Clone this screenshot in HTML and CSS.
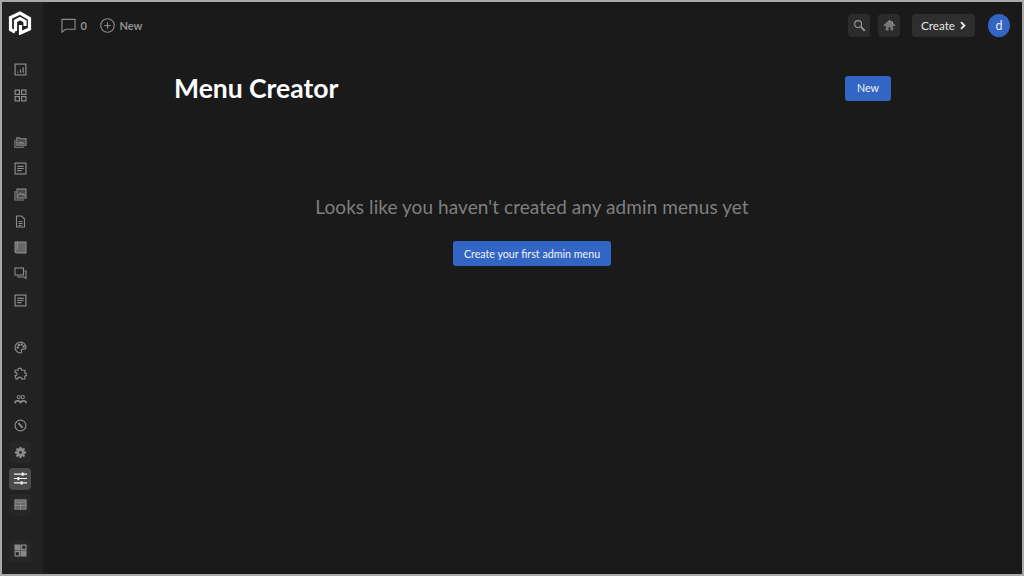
FILE: index.html
```html
<!DOCTYPE html>
<html lang="en">
<head>
<meta charset="utf-8">
<title>Menu Creator</title>
<link rel="stylesheet" href="styles.css">
</head>
<body>
<div class="app">
  <aside class="sidebar">
    <div class="logo">
      <svg viewBox="0 0 24 24" width="24" height="24" fill="none" stroke="#fff" stroke-width="3.200" stroke-linejoin="miter">
        <path d="M7 21L2.500 18.500V6.500L12 2l9.500 5.500V18l-9 4V14"/>
        <path d="M7.500 20V10L12 7.500l5 3V15"/>
      </svg>
    </div>
    <nav class="group group-top">
      <a class="ico"><svg viewBox="0 0 12 12"><rect x="1" y="1" width="10" height="10"/><path d="M3.500 9V8M6 9V6M8.500 9V4"/></svg></a>
      <a class="ico"><svg viewBox="0 0 12 12"><rect x="1" y="1" width="4" height="4"/><rect x="7" y="1" width="4" height="4"/><rect x="1" y="7" width="4" height="4"/><rect x="7" y="7" width="4" height="4"/></svg></a>
    </nav>
    <nav class="group group-content">
      <a class="ico"><svg viewBox="0 0 14 12"><path d="M1 3v8h10"/><path class="low" d="M3 9V1h3l1 1h6v7z"/><path d="M4.500 7.500l2-2 1.500 1.500 1-1 2 1.500"/></svg></a>
      <a class="ico"><svg viewBox="0 0 12 12"><rect x="1" y="1" width="10" height="10"/><path d="M3 4h6M3 6h6M3 8h4"/></svg></a>
      <a class="ico"><svg viewBox="0 0 13 13"><path d="M1 3v9h9"/><rect class="low" x="3" y="1" width="9" height="9"/><path d="M4 8l2.500-3 2 2 1-1 1.500 2"/></svg></a>
      <a class="ico"><svg viewBox="0 0 12 13"><path d="M2 1h5l3 3v8H2z"/><path d="M4 6.500h4M4 8.500h4M4 10.500h3"/></svg></a>
      <a class="ico"><svg viewBox="0 0 12 12"><path class="mid" d="M1 1h10v10H2.500A1.500 1.500 0 0 1 1 9.500z"/><path d="M3 1v7"/></svg></a>
      <a class="ico"><svg viewBox="0 0 13 13"><rect x="1" y="1" width="8.500" height="7"/><path d="M10.500 4H12v7.500l-2-1.500H4V9"/></svg></a>
      <a class="ico"><svg viewBox="0 0 12 12"><rect x="1" y="1" width="10" height="10"/><path d="M3 4h6M3 6h6M3 8h4"/></svg></a>
    </nav>
    <nav class="group group-admin">
      <a class="ico"><svg viewBox="0 0 12 12"><path d="M6 1a5 5 0 1 0 0 10c1.500 0 1.200-1.300.8-2-.4-.8.2-1.500 1-1.500H10c.8 0 1-1 1-1.500C11 3 8.800 1 6 1z"/><circle cx="3.500" cy="6" r=".6"/><circle cx="4.500" cy="3.700" r=".6"/><circle cx="7" cy="3.300" r=".6"/><circle cx="9" cy="5" r=".6"/></svg></a>
      <a class="ico"><svg viewBox="0 0 12 12"><path d="M1 3h2.500C3.500 1.500 4.500 1 5.300 1S7 1.500 7 3h3v2.500c1.200 0 1.500.8 1.500 1.500S11 8.500 10 8.500V11H7c0-1.200-.8-1.700-1.700-1.700S3.500 9.800 3.500 11H1.800L1 8c1.300 0 1.800-.5 1.800-1.500S2 5 1 5z"/></svg></a>
      <a class="ico"><svg viewBox="0 0 14 12"><circle cx="5" cy="3.500" r="1.700"/><circle cx="9.500" cy="3.500" r="1.700"/><path class="thick" d="M1 10c0-1.500 1-2.500 3-2.500S7 8.500 7 10M7.500 10c0-1.500 .5-2.500 2.500-2.500s3 1 3 2.500"/></svg></a>
      <a class="ico"><svg viewBox="0 0 12 12"><circle cx="6" cy="6" r="5"/><path class="thick" d="M4 3.800l4 4.400"/></svg></a>
      <a class="ico tile"><svg viewBox="0 0 12 12"><circle class="solid" cx="6" cy="6" r="3.500"/><circle class="hole" cx="6" cy="6" r="1.300"/><path class="thick" d="M6 .8v2M6 9.200v2M.8 6h2M9.200 6h2M2.300 2.300l1.400 1.400M8.300 8.300l1.400 1.400M2.300 9.700l1.400-1.400M8.300 3.700l1.400-1.400"/></svg></a>
      <a class="ico active"><svg viewBox="0 0 12 12"><path d="M0 2h12M0 6h12M0 10h12"/><path class="knob" d="M8 .5v3M4 4.500v3M7 8.500v3"/></svg></a>
      <a class="ico tile"><svg viewBox="0 0 14 12"><rect class="mid" x="1" y="1" width="12" height="10"/><path d="M1 3.500h12M7 3.500V11M1 7h12"/></svg></a>
    </nav>
    <div class="group-bottom">
      <a class="ico tile"><svg viewBox="0 0 12 12"><rect class="solid" x="1" y="1" width="4.500" height="4.500"/><rect x="7" y="1" width="4" height="4"/><rect x="1" y="7" width="4" height="4"/><rect class="solid" x="6.500" y="6.500" width="4.500" height="4.500"/></svg></a>
    </div>
  </aside>
  <div class="main">
    <header class="topbar">
      <div class="top-left">
        <a class="top-link">
          <svg class="top-icon bubble" viewBox="0 0 16 16"><path d="M1 1.500h14v10.500H5l-4 3z"/></svg>
          <span>0</span>
        </a>
        <a class="top-link">
          <svg class="top-icon plus" viewBox="0 0 16 16"><circle cx="8" cy="8" r="7.200"/><path d="M8 4.500v7M4.500 8h7"/></svg>
          <span>New</span>
        </a>
      </div>
      <div class="top-right">
        <a class="square"><svg viewBox="0 0 14 14"><circle cx="5.500" cy="5.500" r="3.700"/><path class="thick" d="M8.500 8.500l4.200 4.200"/></svg></a>
        <a class="square home"><svg viewBox="0 0 14 14"><path class="roof" d="M3 6.500V12.500h3v-3.500h2v3.500h3V6.500L7 3z"/><path d="M1 7.500L7 2l6 5.500M10 2.500v2"/></svg></a>
        <a class="create"><span>Create</span><svg viewBox="0 0 8 12"><path d="M2 1.500L6.500 6 2 10.500"/></svg></a>
        <div class="avatar">d</div>
      </div>
    </header>
    <main class="content">
      <div class="head">
        <h1>Menu Creator</h1>
        <a class="btn btn-new">New</a>
      </div>
      <div class="empty">
        <p>Looks like you haven't created any admin menus yet</p>
        <a class="btn btn-first">Create your first admin menu</a>
      </div>
    </main>
  </div>
</div>
</body>
</html>
```
FILE: styles.css
```css
* { box-sizing: border-box; }
html, body { margin: 0; height: 100%; }
body {
  background: #1a1a1a;
  font-family: "Lato", "Open Sans", sans-serif;
  color: #fff;
  overflow: hidden;
}
.app {
  display: flex;
  width: 1024px;
  height: 576px;
  border: 2px solid #a9a9a9;
}
.sidebar {
  width: 41px;
  flex: none;
  background: #222222;
  display: flex;
  flex-direction: column;
  align-items: center;
  padding-top: 9px;
}
.logo { width: 24px; height: 24px; margin-left: -5px; }
.logo svg { display: block; }
.group { display: flex; flex-direction: column; gap: 4.300px; margin-left: -5px; }
.group-top { margin-top: 23px; }
.group-content { margin-top: 25px; }
.group-admin { margin-top: 25px; }
.group-bottom { margin-top: 24px; margin-left: -5px; }
.ico {
  width: 22px;
  height: 22px;
  display: flex;
  align-items: center;
  justify-content: center;
  border-radius: 4px;
}
.ico svg {
  width: 13px;
  height: 13px;
  fill: none;
  stroke: #8b8b8b;
  stroke-width: 1.100;
}
.ico .solid { fill: #8b8b8b; }
.ico .mid { fill: #666666; }
.ico .low { fill: #4a4a4a; }
.ico .hole { fill: #2c2c2c; stroke: none; }
.ico .thick { stroke-width: 1.800; }
.ico.tile { background: #272727; }
.ico.active { background: #4a4a4a; }
.ico.active svg { stroke: #f2f2f2; stroke-width: 1.100; width: 13px; height: 13px; }
.ico.active .knob { stroke-width: 1.800; }
.main { flex: 1; min-width: 0; display: flex; flex-direction: column; }
.topbar {
  display: flex;
  justify-content: space-between;
  align-items: center;
  height: 46px;
  padding: 0 12px 0 18px;
}
.top-left { display: flex; align-items: center; gap: 13px; }
.top-link {
  display: flex;
  align-items: center;
  gap: 4.500px;
  color: #8f8f8f;
  font-size: 11px;
  font-weight: 700;
}
.top-icon { width: 15px; height: 15px; fill: none; stroke: #8b8b8b; stroke-width: 1.200; }
.top-right { display: flex; align-items: center; }
.square {
  width: 22px;
  height: 23px;
  background: #2b2b2b;
  border-radius: 4px;
  margin-right: 8px;
  display: flex;
  align-items: center;
  justify-content: center;
}
.square svg { width: 13px; height: 13px; fill: none; stroke: #9a9a9a; stroke-width: 1.200; }
.square .thick { stroke-width: 2; }
.square .roof { fill: #777777; stroke: none; }
.square.home { margin-right: 12px; }
.create {
  display: flex;
  align-items: center;
  justify-content: center;
  gap: 4px;
  width: 63px;
  height: 23px;
  background: #2e2e2e;
  border-radius: 4px;
  font-size: 11.700px;
  color: #e6e6e6;
  margin-right: 13px;
}
.create svg { width: 7px; height: 9px; fill: none; stroke: #f0f0f0; stroke-width: 2.400; }
.avatar {
  width: 22px;
  height: 23px;
  border-radius: 50%;
  background: #3366c4;
  display: flex;
  align-items: center;
  justify-content: center;
  font-size: 12.500px;
  color: #e8e8e8;
}
.content { flex: 1; padding: 12px 131px 0 131px; }
.head {
  display: flex;
  justify-content: space-between;
  align-items: center;
  height: 56px;
}
h1 {
  margin: 0;
  font-size: 26.500px;
  font-weight: 700;
  line-height: 34px;
  color: #fff;
}
.btn {
  display: flex;
  align-items: center;
  justify-content: center;
  height: 25px;
  padding-bottom: 1px;
  background: #3366c4;
  border-radius: 3px;
  color: #f2f2f2;
  font-size: 10.700px;
}
.btn-new { width: 46px; }
.empty { display: flex; flex-direction: column; align-items: center; margin-top: 78px; padding-right: 1px; }
.empty p {
  margin: 0 0 21px;
  font-size: 19px;
  letter-spacing: .07px;
  line-height: 26px;
  color: #7f7f7f;
}
.btn-first { width: 158px; }
```
